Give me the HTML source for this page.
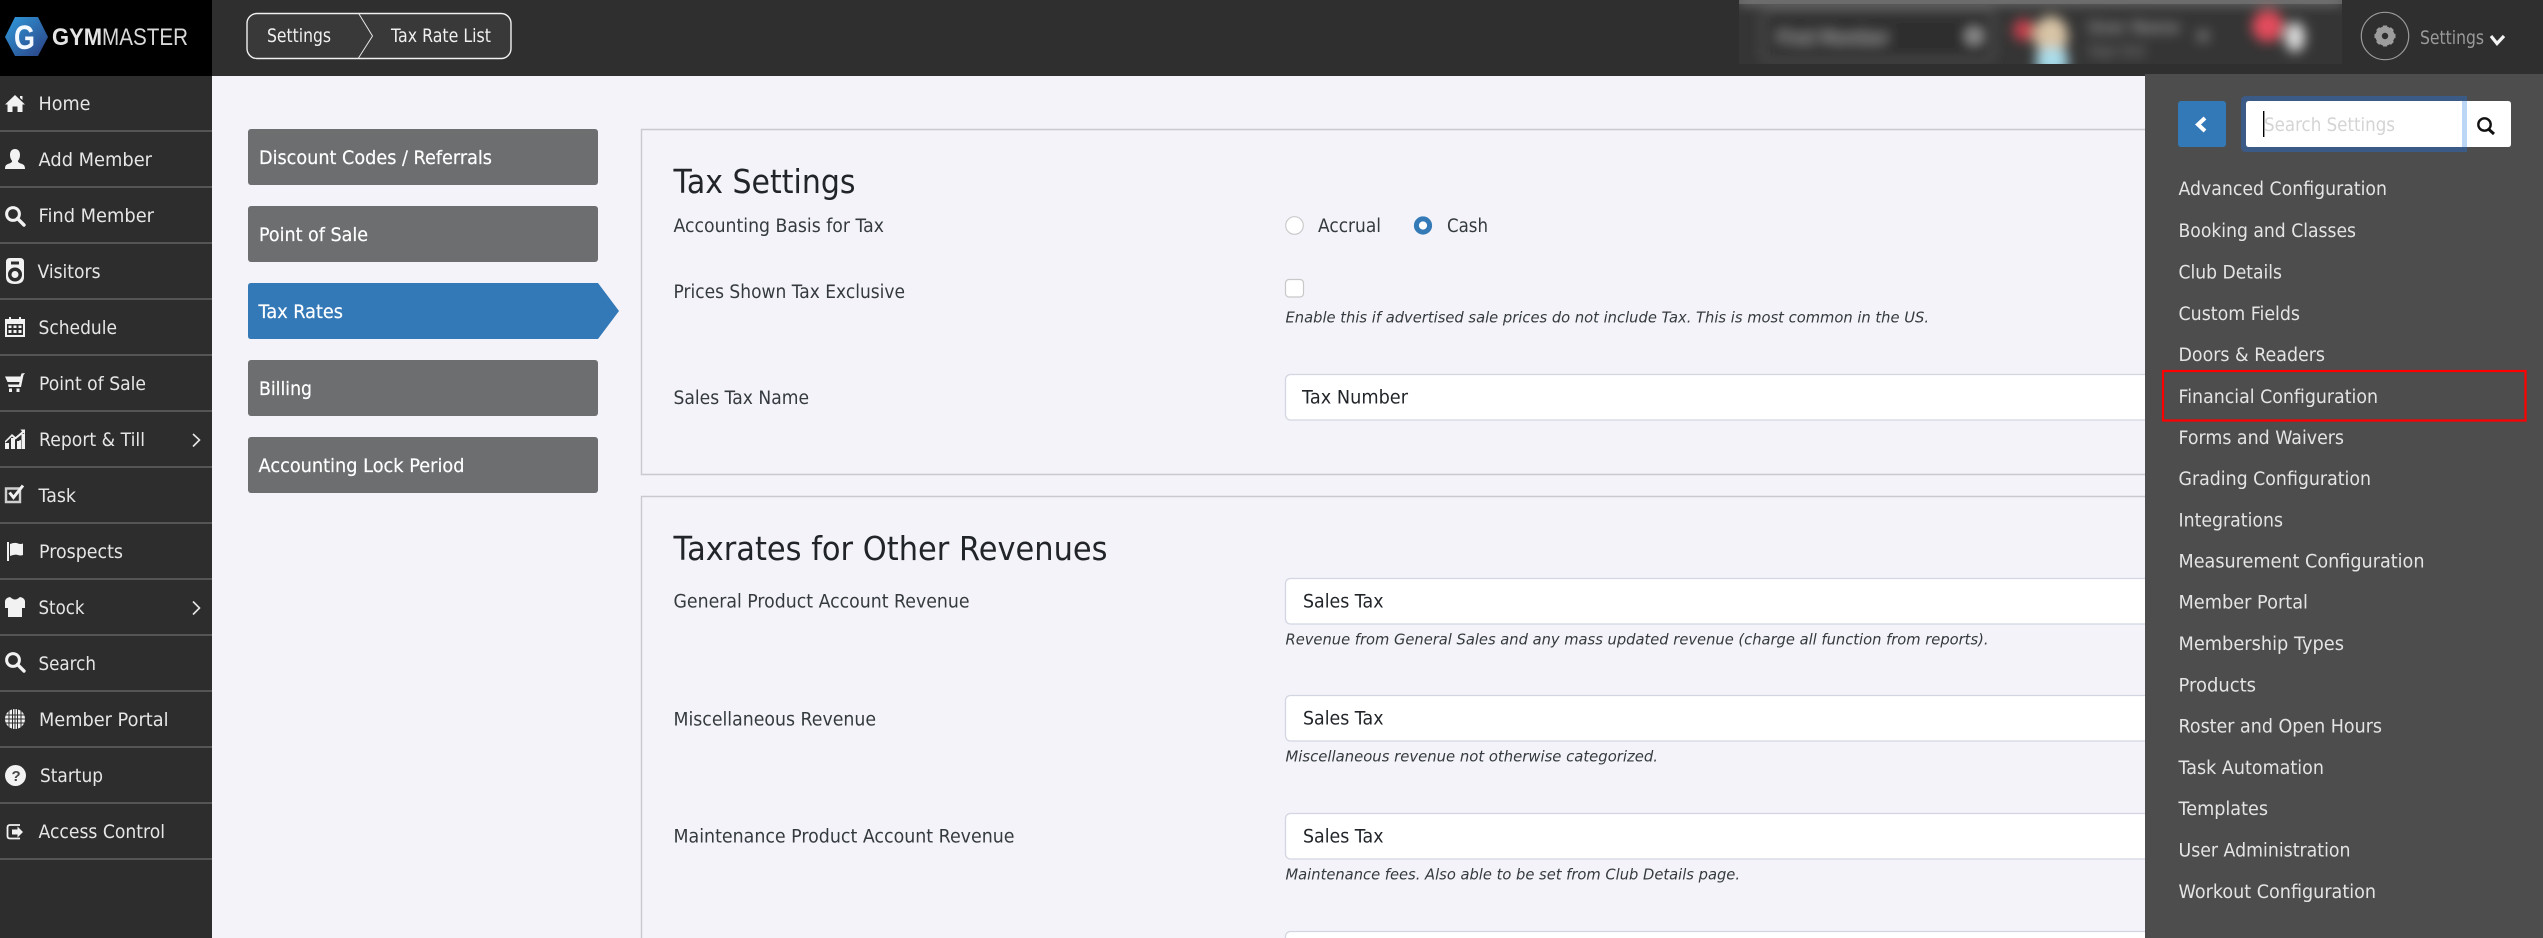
<!DOCTYPE html>
<html lang="en"><head><meta charset="utf-8"><title>Tax Rate List</title>
<style>
html,body{margin:0;padding:0;width:2543px;height:938px;overflow:hidden;background:#f3f3f9}
svg{display:block}
text{font-family:"DejaVu Sans","Liberation Sans",sans-serif}
.nav text{font-size:19px;fill:#e6e6e6}
.tab text{font-size:19px;fill:#fff;stroke:#fff;stroke-width:.2}
.lab text{font-size:18.5px;fill:#343a40}
.hint text{font-size:15.5px;font-style:italic;fill:#343a40}
.val text{font-size:18.5px;fill:#212529}
.menu text{font-size:18.5px;fill:#e4e4e4}
.ic{fill:#f2f2f2}
</style></head><body>
<svg xmlns="http://www.w3.org/2000/svg" width="2543" height="938" viewBox="0 0 2543 938">
<defs>
<linearGradient id="hx" x1="0" y1="0" x2="1" y2="1"><stop offset="0" stop-color="#2f9bdc"/><stop offset="1" stop-color="#2b3f82"/></linearGradient>
<filter id="bl" x="-5%" y="-30%" width="110%" height="160%"><feGaussianBlur stdDeviation="6"/></filter>
<clipPath id="blc"><rect x="1739" y="0" width="603" height="64"/></clipPath>
<g id="mag"><circle cx="0" cy="0" r="6.4" fill="none" stroke="#f2f2f2" stroke-width="3"/><path d="M4.5 4.5L11 11" stroke="#f2f2f2" stroke-width="3.4" stroke-linecap="round"/></g>
</defs>

<rect width="2543" height="938" fill="#f3f3f9"/>

<!-- top bar -->
<rect x="0" y="0" width="2543" height="76" fill="#2f2f2f"/>
<rect x="0" y="0" width="212" height="76" fill="#000"/>
<polygon points="5,37 15,17 38,17 48,37 38,56 15,56" fill="url(#hx)"/>
<text x="14" y="49" font-size="34" font-weight="700" fill="#f4f8ff" textLength="21" lengthAdjust="spacingAndGlyphs" style="font-family:'Liberation Sans',sans-serif">G</text>
<text x="52" y="45" font-size="24" font-weight="700" fill="#e4e4e4" textLength="50" lengthAdjust="spacingAndGlyphs" style="font-family:'Liberation Sans',sans-serif">GYM</text>
<text x="102" y="45" font-size="24" fill="#d8d8d8" textLength="86" lengthAdjust="spacingAndGlyphs" style="font-family:'Liberation Sans',sans-serif">MASTER</text>

<!-- breadcrumb -->
<rect x="247" y="13.5" width="264" height="45" rx="10" fill="#393939" stroke="#f0f0f0" stroke-width="1.4"/>
<path d="M359 14L372.5 36L358.5 58" fill="none" stroke="#e8e8e8" stroke-width="1"/>
<text x="267" y="42" font-size="19" fill="#f0f0f0" textLength="64" lengthAdjust="spacingAndGlyphs">Settings</text>
<text x="391" y="42" font-size="19" fill="#f0f0f0" textLength="100" lengthAdjust="spacingAndGlyphs">Tax Rate List</text>

<!-- blurred header area -->
<g clip-path="url(#blc)">
<rect x="1739" y="0" width="603" height="64" fill="#353535"/>
<rect x="1739" y="0" width="603" height="4" fill="#5a5a5a"/>
<g filter="url(#bl)">
<rect x="1739" y="-2" width="603" height="6" fill="#8a8a8a"/>
<rect x="1763" y="11" width="230" height="49" rx="6" fill="#2e2e2e" stroke="#5a5a5a" stroke-width="3"/>
<text x="1777" y="44" font-size="19" font-weight="700" fill="#8a8a8a" textLength="112" lengthAdjust="spacingAndGlyphs">Find Member</text>
<circle cx="1974" cy="36" r="8" fill="#999"/>
<circle cx="2024" cy="30" r="11" fill="#c8404e"/>
<ellipse cx="2051" cy="36" rx="17" ry="20" fill="#d8c4a6"/>
<rect x="2036" y="48" width="32" height="26" rx="10" fill="#a8dcea"/>
<text x="2088" y="33" font-size="17" font-weight="700" fill="#909090" textLength="92" lengthAdjust="spacingAndGlyphs">User Name</text>
<text x="2088" y="56" font-size="15" font-weight="700" fill="#707070" textLength="57" lengthAdjust="spacingAndGlyphs">Sign Out</text>
<circle cx="2203" cy="36" r="6" fill="#777"/>
<circle cx="2268" cy="26" r="16" fill="#e24c5c"/>
<ellipse cx="2295" cy="37" rx="10" ry="15" fill="#dcdcdc"/>
</g>
</g>

<!-- settings dropdown in header -->
<circle cx="2385" cy="36" r="23.7" fill="none" stroke="#9a9a9a" stroke-width="1.2"/>
<g transform="translate(2385 36)" fill="#9d9d9d">
<circle r="7.2" fill="none" stroke="#9d9d9d" stroke-width="4.6"/>
<rect x="-2.2" y="-10.5" width="4.4" height="21" rx=".6"/>
<rect x="-2.2" y="-10.5" width="4.4" height="21" rx=".6" transform="rotate(45)"/>
<rect x="-2.2" y="-10.5" width="4.4" height="21" rx=".6" transform="rotate(90)"/>
<rect x="-2.2" y="-10.5" width="4.4" height="21" rx=".6" transform="rotate(135)"/>
<circle r="3.2" fill="#2f2f2f"/>
</g>
<text x="2420" y="44" font-size="19" fill="#9a9a9a" textLength="64" lengthAdjust="spacingAndGlyphs">Settings</text>
<path d="M2491 36L2497 43.5L2504 36" fill="none" stroke="#f4f4f4" stroke-width="3.2"/>

<!-- sidebar -->
<rect x="0" y="76" width="212" height="862" fill="#2d2d2d"/>
<g fill="#555">
<rect y="130" width="212" height="2"/><rect y="186" width="212" height="2"/><rect y="242" width="212" height="2"/><rect y="298" width="212" height="2"/><rect y="354" width="212" height="2"/><rect y="410" width="212" height="2"/><rect y="466" width="212" height="2"/><rect y="522" width="212" height="2"/><rect y="578" width="212" height="2"/><rect y="634" width="212" height="2"/><rect y="690" width="212" height="2"/><rect y="746" width="212" height="2"/><rect y="802" width="212" height="2"/><rect y="858" width="212" height="2"/>
</g>
<g class="nav">
<text x="38.5" y="110" textLength="52" lengthAdjust="spacingAndGlyphs">Home</text>
<text x="38.5" y="166" textLength="113.5" lengthAdjust="spacingAndGlyphs">Add Member</text>
<text x="38.5" y="222" textLength="115.5" lengthAdjust="spacingAndGlyphs">Find Member</text>
<text x="37.5" y="278" textLength="63" lengthAdjust="spacingAndGlyphs">Visitors</text>
<text x="38.5" y="334" textLength="78.5" lengthAdjust="spacingAndGlyphs">Schedule</text>
<text x="39" y="390" textLength="107" lengthAdjust="spacingAndGlyphs">Point of Sale</text>
<text x="39" y="446" textLength="106" lengthAdjust="spacingAndGlyphs">Report &amp; Till</text>
<text x="38.5" y="502" textLength="37.5" lengthAdjust="spacingAndGlyphs">Task</text>
<text x="39" y="558" textLength="84" lengthAdjust="spacingAndGlyphs">Prospects</text>
<text x="38.5" y="614" textLength="46" lengthAdjust="spacingAndGlyphs">Stock</text>
<text x="38.5" y="670" textLength="57.5" lengthAdjust="spacingAndGlyphs">Search</text>
<text x="39" y="726" textLength="129.5" lengthAdjust="spacingAndGlyphs">Member Portal</text>
<text x="40" y="782" textLength="63" lengthAdjust="spacingAndGlyphs">Startup</text>
<text x="38.5" y="838" textLength="126.5" lengthAdjust="spacingAndGlyphs">Access Control</text>
</g>
<path d="M193 434L199.5 440L193 446.5M193 601.5L199.5 608L193 614.5" fill="none" stroke="#e6e6e6" stroke-width="1.6"/>

<!-- sidebar icons -->
<path class="ic" d="M15 95L25 104.5H22.5V112H17.5V106.5H12.5V112H7.5V104.5H5L15 95ZM20 96H22.5V100L20 98Z"/>
<path class="ic" d="M15 149c3.4 0 5 2.6 5 6 0 2.7-1 4.6-2.2 6 .3 1.4 1.4 2 3.2 2.6 2.4.8 4 1.4 4 5.4H5c0-4 1.600-4.600 4-5.400 1.800-.6 2.900-1.200 3.200-2.600C11 159.600 10 157.700 10 155c0-3.400 1.600-6 5-6Z"/>
<use href="#mag" x="13" y="214"/>
<path class="ic" fill-rule="evenodd" d="M10 258H20Q24 258 24 262V277Q24 284 15 284Q6 284 6 277V262Q6 258 10 258ZM11 261.500H19V264.500H11ZM15 267.500A7 7 0 1 0 15.010 281.500A7 7 0 1 0 15 267.500ZM15 271A3.500 3.500 0 1 1 14.990 278A3.500 3.500 0 1 1 15 271Z"/>
<path class="ic" fill-rule="evenodd" d="M5 319H9V317H11V319H19V317H21V319H25V337H5ZM7 324V335H23V324ZM8.500 325.500H11.500V328H8.500ZM13.500 325.500H16.500V328H13.500ZM18.500 325.500H21.500V328H18.500ZM8.500 330H11.500V333H8.500ZM13.500 330H16.500V333H13.500ZM18.500 330H21.500V333H18.500Z"/>
<path class="ic" d="M25 373L23.500 375 21 387H8.500L8 384.500H19L19.500 382H7.500L5 376.500H20.500L21.500 373.500ZM9 388.500H12V392H9ZM16.500 388.500H19.500V392H16.500Z"/>
<path class="ic" d="M5 449V443H9V449ZM11 449V438H15V449ZM17 449V441H19V440.500L21 440V449H17ZM21.500 449V434H25V449ZM5 441L12 434 15.500 437 22 431.500 20.500 429.500H25V434.500L23.500 433 15.500 439.500 12 436.500 5 443Z"/>
<path d="M6 488.500H20V502H6Z" fill="none" stroke="#cfcfcf" stroke-width="2.400"/>
<path d="M9.500 492.500L13.500 497.500L23 485.500" fill="none" stroke="#f2f2f2" stroke-width="3"/>
<rect class="ic" x="7" y="542" width="2" height="19"/>
<path class="ic" d="M10 544Q15 542 18 543.500Q20.500 544.500 23 543.500V555Q20.500 556 18 555Q15 554 10 556Z"/>
<path class="ic" d="M10 597L12 598.500Q15 600.500 18 598.500L20 597Q24 597.500 25 601V608H22V617H8V608H5V601Q6 597.500 10 597Z"/>
<use href="#mag" x="13" y="660"/>
<circle cx="15" cy="719" r="10" class="ic"/>
<path d="M5 715H25M5 719H25M5 723H25M9 710V728M12.500 709V729M15 709V729M17.500 709V729M21 710V728" stroke="#2d2d2d" stroke-width="1" fill="none"/>
<circle cx="15.500" cy="775.500" r="10.500" class="ic"/>
<text x="11.500" y="781" font-size="15" font-weight="700" fill="#444" style="font-family:'Liberation Sans',sans-serif">?</text>
<path d="M20 825H10Q7.500 825 7.500 827.500V836Q7.500 838.500 10 838.500H20" fill="none" stroke="#f2f2f2" stroke-width="1.800"/>
<path class="ic" d="M12 829.500H17.500V826.500L23 832L17.500 837.500V834.500H12Z"/>

<!-- left tabs -->
<g fill="#6d6e70">
<rect x="248" y="129" width="350" height="56" rx="3"/>
<rect x="248" y="206" width="350" height="56" rx="3"/>
<rect x="248" y="360" width="350" height="56" rx="3"/>
<rect x="248" y="437" width="350" height="56" rx="3"/>
</g>
<path d="M251 283H598L619 311L598 339H251Q248 339 248 336V286Q248 283 251 283Z" fill="#3479b7"/>
<g class="tab">
<text x="259" y="164" textLength="233" lengthAdjust="spacingAndGlyphs">Discount Codes / Referrals</text>
<text x="259" y="241" textLength="109" lengthAdjust="spacingAndGlyphs">Point of Sale</text>
<text x="258.500" y="318" textLength="84.500" lengthAdjust="spacingAndGlyphs">Tax Rates</text>
<text x="259" y="395" textLength="53" lengthAdjust="spacingAndGlyphs">Billing</text>
<text x="258.500" y="472" textLength="206" lengthAdjust="spacingAndGlyphs">Accounting Lock Period</text>
</g>

<!-- cards -->
<path d="M2145 129.500H641.500V474.500H2145" fill="none" stroke="#c9c9ce" stroke-width="1.400"/>
<path d="M2145 496.500H641.500V938" fill="none" stroke="#c9c9ce" stroke-width="1.400"/>
<text x="673.500" y="193" font-size="33" fill="#212529" textLength="182" lengthAdjust="spacingAndGlyphs">Tax Settings</text>
<text x="673.500" y="560" font-size="33" fill="#212529" textLength="434" lengthAdjust="spacingAndGlyphs">Taxrates for Other Revenues</text>

<g class="lab">
<text x="673.500" y="232" textLength="210.500" lengthAdjust="spacingAndGlyphs">Accounting Basis for Tax</text>
<text x="673.500" y="298" textLength="231.500" lengthAdjust="spacingAndGlyphs">Prices Shown Tax Exclusive</text>
<text x="673.500" y="404" textLength="135.500" lengthAdjust="spacingAndGlyphs">Sales Tax Name</text>
<text x="673.500" y="607.500" textLength="296" lengthAdjust="spacingAndGlyphs">General Product Account Revenue</text>
<text x="673.500" y="725.500" textLength="202.500" lengthAdjust="spacingAndGlyphs">Miscellaneous Revenue</text>
<text x="673.500" y="842.500" textLength="341" lengthAdjust="spacingAndGlyphs">Maintenance Product Account Revenue</text>
<text x="1318" y="232" textLength="63" lengthAdjust="spacingAndGlyphs">Accrual</text>
<text x="1447" y="232" textLength="41" lengthAdjust="spacingAndGlyphs">Cash</text>
</g>

<!-- radios / checkbox -->
<circle cx="1294.500" cy="225.500" r="8.800" fill="#fff" stroke="#cbcbcb" stroke-width="1.200"/>
<circle cx="1423" cy="225.500" r="6.600" fill="#fff" stroke="#337ab7" stroke-width="5"/>
<rect x="1285.500" y="279.500" width="18" height="17.500" rx="3.500" fill="#fff" stroke="#c8c8c8" stroke-width="1.200"/>

<!-- inputs -->
<g fill="#fff" stroke="#d3d6e2" stroke-width="1.300">
<rect x="1285.500" y="374.500" width="900" height="45.500" rx="5"/>
<rect x="1285.500" y="578.500" width="900" height="45.500" rx="5"/>
<rect x="1285.500" y="695.500" width="900" height="45.500" rx="5"/>
<rect x="1285.500" y="813.500" width="900" height="45.500" rx="5"/>
<rect x="1285.500" y="931.500" width="900" height="45.500" rx="5"/>
</g>
<g class="val">
<text x="1302" y="403.500" textLength="106" lengthAdjust="spacingAndGlyphs">Tax Number</text>
<text x="1303" y="607.500" textLength="80.500" lengthAdjust="spacingAndGlyphs">Sales Tax</text>
<text x="1303" y="724.500" textLength="80.500" lengthAdjust="spacingAndGlyphs">Sales Tax</text>
<text x="1303" y="842.500" textLength="80.500" lengthAdjust="spacingAndGlyphs">Sales Tax</text>
</g>
<g class="hint">
<text x="1285.500" y="322.500" textLength="643.500" lengthAdjust="spacingAndGlyphs">Enable this if advertised sale prices do not include Tax. This is most common in the US.</text>
<text x="1285.500" y="644.500" textLength="703" lengthAdjust="spacingAndGlyphs">Revenue from General Sales and any mass updated revenue (charge all function from reports).</text>
<text x="1285.500" y="761.500" textLength="372.500" lengthAdjust="spacingAndGlyphs">Miscellaneous revenue not otherwise categorized.</text>
<text x="1285.500" y="879.500" textLength="454.500" lengthAdjust="spacingAndGlyphs">Maintenance fees. Also able to be set from Club Details page.</text>
</g>

<!-- settings panel -->
<rect x="2145" y="74" width="398" height="864" fill="#4d4d4d"/>
<rect x="2178" y="101" width="48" height="46" rx="3" fill="#3479b7"/>
<path d="M2205 118L2198 124.500L2205 131" fill="none" stroke="#fff" stroke-width="4"/>
<path d="M2246 96H2467V152H2246Q2241 152 2241 147V101Q2241 96 2246 96Z" fill="#3c5a86"/>
<rect x="2462" y="101" width="5" height="46" fill="#bcd6f5"/>
<path d="M2467 101H2508Q2511 101 2511 104V144Q2511 147 2508 147H2467Z" fill="#fff"/>
<path d="M2249 101H2462V147H2249Q2246 147 2246 144V104Q2246 101 2249 101Z" fill="#fff"/>
<text x="2264" y="131" font-size="19" fill="#d4d4d4" textLength="131" lengthAdjust="spacingAndGlyphs">Search Settings</text>
<rect x="2263" y="111" width="1.400" height="26" fill="#000"/>
<circle cx="2484.500" cy="124.500" r="6.200" fill="none" stroke="#111" stroke-width="2.400"/>
<path d="M2489 129.500L2494 134" stroke="#111" stroke-width="3"/>

<g class="menu">
<text x="2178.500" y="195" textLength="208.500" lengthAdjust="spacingAndGlyphs">Advanced Configuration</text>
<text x="2178.500" y="237" textLength="177.500" lengthAdjust="spacingAndGlyphs">Booking and Classes</text>
<text x="2178.500" y="278.500" textLength="103.500" lengthAdjust="spacingAndGlyphs">Club Details</text>
<text x="2178.500" y="320" textLength="121.500" lengthAdjust="spacingAndGlyphs">Custom Fields</text>
<text x="2178.500" y="361" textLength="146.500" lengthAdjust="spacingAndGlyphs">Doors &amp; Readers</text>
<text x="2178.500" y="403" textLength="199.500" lengthAdjust="spacingAndGlyphs">Financial Configuration</text>
<text x="2178.500" y="444" textLength="165.500" lengthAdjust="spacingAndGlyphs">Forms and Waivers</text>
<text x="2178.500" y="485" textLength="192.500" lengthAdjust="spacingAndGlyphs">Grading Configuration</text>
<text x="2178.500" y="526.500" textLength="104.500" lengthAdjust="spacingAndGlyphs">Integrations</text>
<text x="2178.500" y="567.500" textLength="246" lengthAdjust="spacingAndGlyphs">Measurement Configuration</text>
<text x="2178.500" y="608.500" textLength="129.500" lengthAdjust="spacingAndGlyphs">Member Portal</text>
<text x="2178.500" y="650" textLength="165.500" lengthAdjust="spacingAndGlyphs">Membership Types</text>
<text x="2178.500" y="691.500" textLength="77.500" lengthAdjust="spacingAndGlyphs">Products</text>
<text x="2178.500" y="732.500" textLength="203.500" lengthAdjust="spacingAndGlyphs">Roster and Open Hours</text>
<text x="2178.500" y="774" textLength="145.500" lengthAdjust="spacingAndGlyphs">Task Automation</text>
<text x="2178.500" y="815" textLength="89.500" lengthAdjust="spacingAndGlyphs">Templates</text>
<text x="2178.500" y="856.500" textLength="172" lengthAdjust="spacingAndGlyphs">User Administration</text>
<text x="2178.500" y="898" textLength="197.500" lengthAdjust="spacingAndGlyphs">Workout Configuration</text>
</g>
<rect x="2163" y="371" width="362.500" height="49.500" fill="none" stroke="#f00" stroke-width="2.200"/>
</svg>
</body></html>
